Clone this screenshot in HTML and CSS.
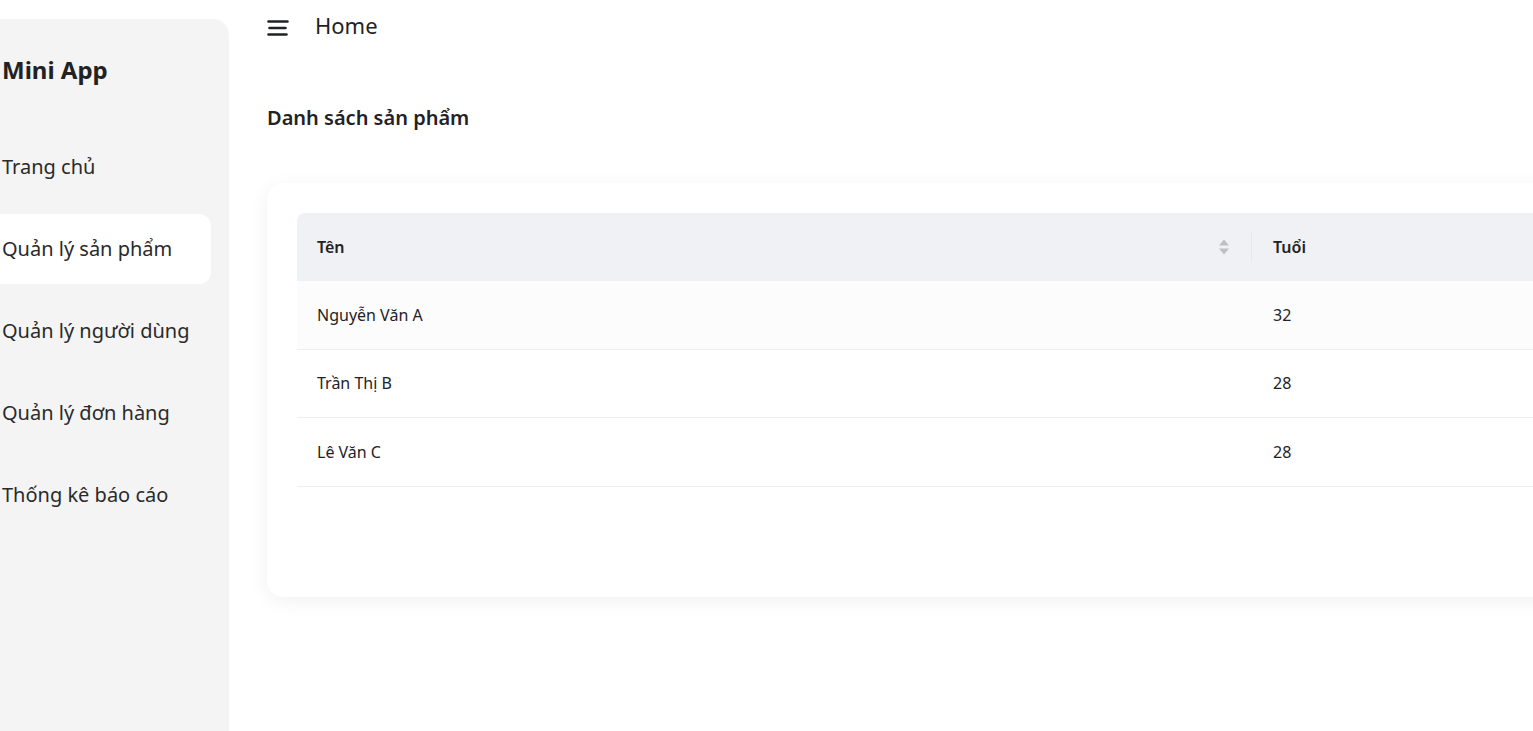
FILE: index.html
```html
<!DOCTYPE html>
<html lang="vi">
<head>
<meta charset="utf-8">
<link rel="stylesheet" href="styles.css">
</head>
<body>
<div class="app">
  <aside class="sidebar">
    <div class="brand">Mini App</div>
    <nav class="menu">
      <div class="menu-item">Trang chủ</div>
      <div class="menu-item active">Quản lý sản phẩm</div>
      <div class="menu-item">Quản lý người dùng</div>
      <div class="menu-item">Quản lý đơn hàng</div>
      <div class="menu-item">Thống kê báo cáo</div>
    </nav>
  </aside>
  <main class="main">
    <header class="topbar">
      <svg class="burger" width="22" height="18" viewBox="0 0 22 18"><path d="M1.5 2.5h19M2.5 9h16M1.5 15.5h18" stroke="#1f2226" stroke-width="2.6" stroke-linecap="round" fill="none"/></svg>
      <span class="crumb">Home</span>
    </header>
    <h1 class="title">Danh sách sản phẩm</h1>
    <section class="card">
      <table class="table">
        <thead>
          <tr>
            <th class="col-name"><div class="th-inner"><span>Tên</span>
              <svg class="sorter" width="12" height="18" viewBox="0 0 12 18"><path d="M6 1.5L11 7.5H1z" fill="#bfbfbf"/><path d="M6 16.5L1 10.5h10z" fill="#bfbfbf"/></svg></div></th>
            <th class="col-age">Tuổi</th>
          </tr>
        </thead>
        <tbody>
          <tr class="hover"><td>Nguyễn Văn A</td><td>32</td></tr>
          <tr><td>Trần Thị B</td><td>28</td></tr>
          <tr><td>Lê Văn C</td><td>28</td></tr>
        </tbody>
      </table>
    </section>
  </main>
</div>
</body>
</html>
```

FILE: styles.css
```css
html, body {
  margin: 0;
  padding: 0;
  background: #ffffff;
  overflow: hidden;
  height: 100%;
}
body {
  font-family: "Noto Sans", "Open Sans", sans-serif;
  color: #1f2226;
}
.app {
  display: flex;
  height: 731px;
}
.sidebar {
  width: 229px;
  flex: none;
  margin-top: 19px;
  background: #f4f4f4;
  border-top-right-radius: 16px;
  padding-left: 2px;
  box-sizing: border-box;
}
.brand {
  font-size: 24px;
  font-weight: 700;
  height: 40px;
  line-height: 40px;
  margin-top: 31px;
  color: #222;
}
.menu {
  margin-top: 42px;
  display: flex;
  flex-direction: column;
  gap: 12px;
  margin-left: -2px;
  width: 211px;
}
.menu-item {
  height: 70px;
  line-height: 70px;
  padding-left: 2px;
  font-size: 20px;
  color: #2a2a2a;
  border-radius: 0 12px 12px 0;
}
.menu-item.active {
  background: #ffffff;
}
.main {
  margin-left: 38px;
  flex: none;
  width: 1400px;
}
.topbar {
  display: flex;
  align-items: center;
  height: 52px;
  gap: 26px;
}
.burger {
  display: block;
  margin-top: 4px;
}
.crumb {
  font-size: 22px;
  color: #1f2226;
  margin-top: -2px;
}
.title {
  margin: 51px 0 0 0;
  font-size: 20px;
  font-weight: 600;
  line-height: 30px;
  height: 30px;
  color: #1f2226;
}
.card {
  margin-top: 50px;
  background: #fff;
  border-radius: 16px;
  box-shadow: 0 4px 20px rgba(0,0,0,0.06);
  padding: 30px 30px 110px 30px;
}
.table {
  width: 100%;
  border-collapse: separate;
  border-spacing: 0;
  font-size: 16px;
}
.table th {
  background: #f0f1f5;
  height: 68px;
  text-align: left;
  font-weight: 600;
  padding: 0 20px;
  color: #222;
}
.table th.col-name {
  width: 915px;
  border-top-left-radius: 8px;
  position: relative;
}
.table th.col-age {
  padding-left: 21px;
}
.table th.col-name::after {
  content: "";
  position: absolute;
  right: 0;
  top: 20px;
  bottom: 20px;
  width: 1px;
  background: #e6e7ea;
}
.th-inner {
  display: flex;
  align-items: center;
  justify-content: space-between;
}
.sorter {
  display: block;
  margin-right: 2px;
}
.table td {
  height: 68.5px;
  padding: 0 20px;
  border-bottom: 1px solid #eeeeee;
  box-sizing: border-box;
  color: #1f2226;
}
.table td + td {
  padding-left: 21px;
}
.table tr.hover td {
  background: #fcfcfc;
}
```
